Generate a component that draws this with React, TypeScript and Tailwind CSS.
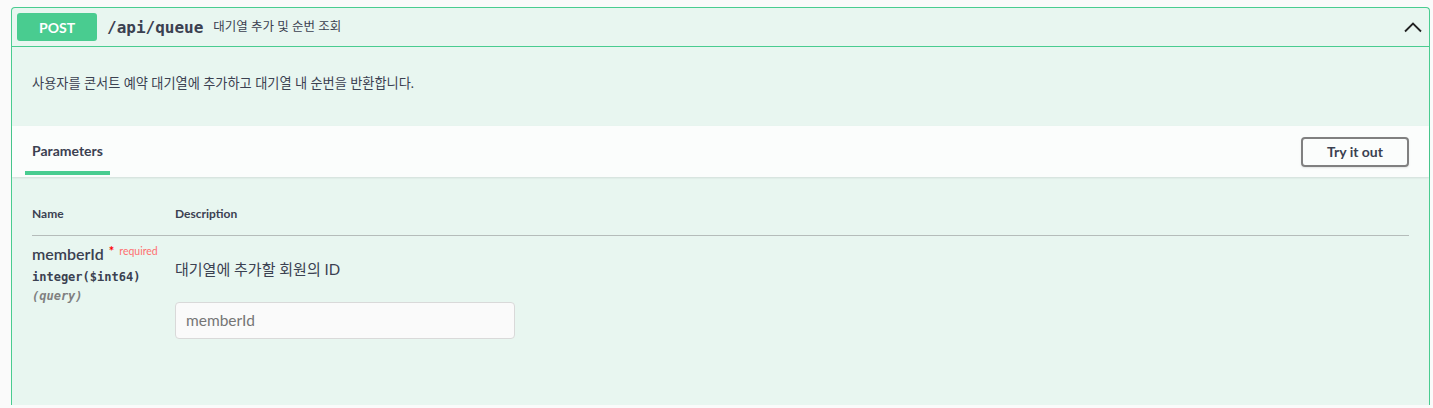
export default function App() {
  const sans = { fontFamily: 'Lato, "Noto Sans CJK KR", sans-serif' };
  return (
    <div className="min-h-screen bg-[#fafafa] pt-[7px] pl-[11px] pr-[3px]" style={sans}>
      <div className="rounded-t-[4px] border border-b-0 border-[#49cc90] bg-[#e8f6f0] text-[#3b4151]">
        {/* Header */}
        <div className="flex h-[39px] items-center border-b border-[#49cc90] pl-[5px] pr-[5px]">
          <span className="flex h-[28px] w-[80px] items-center justify-center rounded-[3px] bg-[#49cc90] text-[14px] font-bold text-white">
            POST
          </span>
          <span className="ml-[10px] mt-[1px] font-['DejaVu_Sans_Mono',monospace] text-[16px] font-bold text-[#3b4151]">
            /api/queue
          </span>
          <span className="ml-[10px] text-[12.5px] text-[#3b4151]">대기열 추가 및 순번 조회</span>
          <svg className="ml-auto mr-[1px]" width="20" height="20" viewBox="0 0 20 20">
            <path d="M2 14.5 L10 6.5 L18 14.5" fill="none" stroke="#222" strokeWidth="1.8" />
          </svg>
        </div>

        {/* Description */}
        <div className="flex h-[79px] items-center px-[20px] pb-[6px]">
          <p className="text-[13.2px] text-[#3b4151]">
            사용자를 콘서트 예약 대기열에 추가하고 대기열 내 순번을 반환합니다.
          </p>
        </div>

        {/* Tab header */}
        <div className="flex h-[51px] items-center justify-between bg-[#fbfdfc] px-[20px] shadow-[0_1px_2px_rgba(0,0,0,0.1)]">
          <div className="relative -ml-[7px] flex h-full items-center px-[7px]">
            <span className="-mt-[2px] text-[14px] font-bold text-[#3b4151]">Parameters</span>
            <span className="absolute bottom-[2px] left-0 right-0 h-[4px] bg-[#49cc90]" />
          </div>
          <button className="h-[30px] w-[108px] rounded-[4px] border-2 border-[#808080] bg-transparent text-[14px] font-bold text-[#3b4151] shadow-[0_1px_2px_rgba(0,0,0,0.1)]">
            Try it out
          </button>
        </div>

        {/* Parameters table */}
        <div className="px-[20px] pt-[28px] pb-[66px]">
          <div className="flex border-b border-[#b5bcba] pb-[12px] text-[12px] font-bold text-[#3b4151]">
            <div className="w-[143px]">Name</div>
            <div>Description</div>
          </div>
          <div className="flex pt-[8px]">
            <div className="w-[143px]">
              <div className="flex items-start">
                <span className="text-[16px] font-semibold leading-[20px] text-[#3b4151]">memberId</span>
                <span className="ml-[5px] -mt-[1px] flex items-start text-[10.5px] text-[#ff6f6f]">
                  <span className="text-[13px] font-bold leading-[16px] text-[red]">*</span>
                  <span className="ml-[5px] leading-[16px]">required</span>
                </span>
              </div>
              <div className="mt-[4px] font-['DejaVu_Sans_Mono',monospace] text-[12px] font-bold leading-[18px] text-[#3b4151]">
                integer($int64)
              </div>
              <div className="mt-[1px] font-['DejaVu_Sans_Mono',monospace] text-[12px] font-bold italic leading-[18px] text-[#808080]">
                (query)
              </div>
            </div>
            <div className="pt-[14px]">
              <div className="text-[15px] text-[#3b4151]">대기열에 추가할 회원의 ID</div>
              <input
                className="mt-[21px] h-[37px] w-[340px] rounded-[4px] border border-[#d9d9d9] bg-[#fafafa] px-[10px] text-[15.5px] text-[#3b4151] outline-none placeholder:text-[#757575]"
                placeholder="memberId"
                style={sans}
              />
            </div>
          </div>
        </div>
      </div>
    </div>
  );
}
